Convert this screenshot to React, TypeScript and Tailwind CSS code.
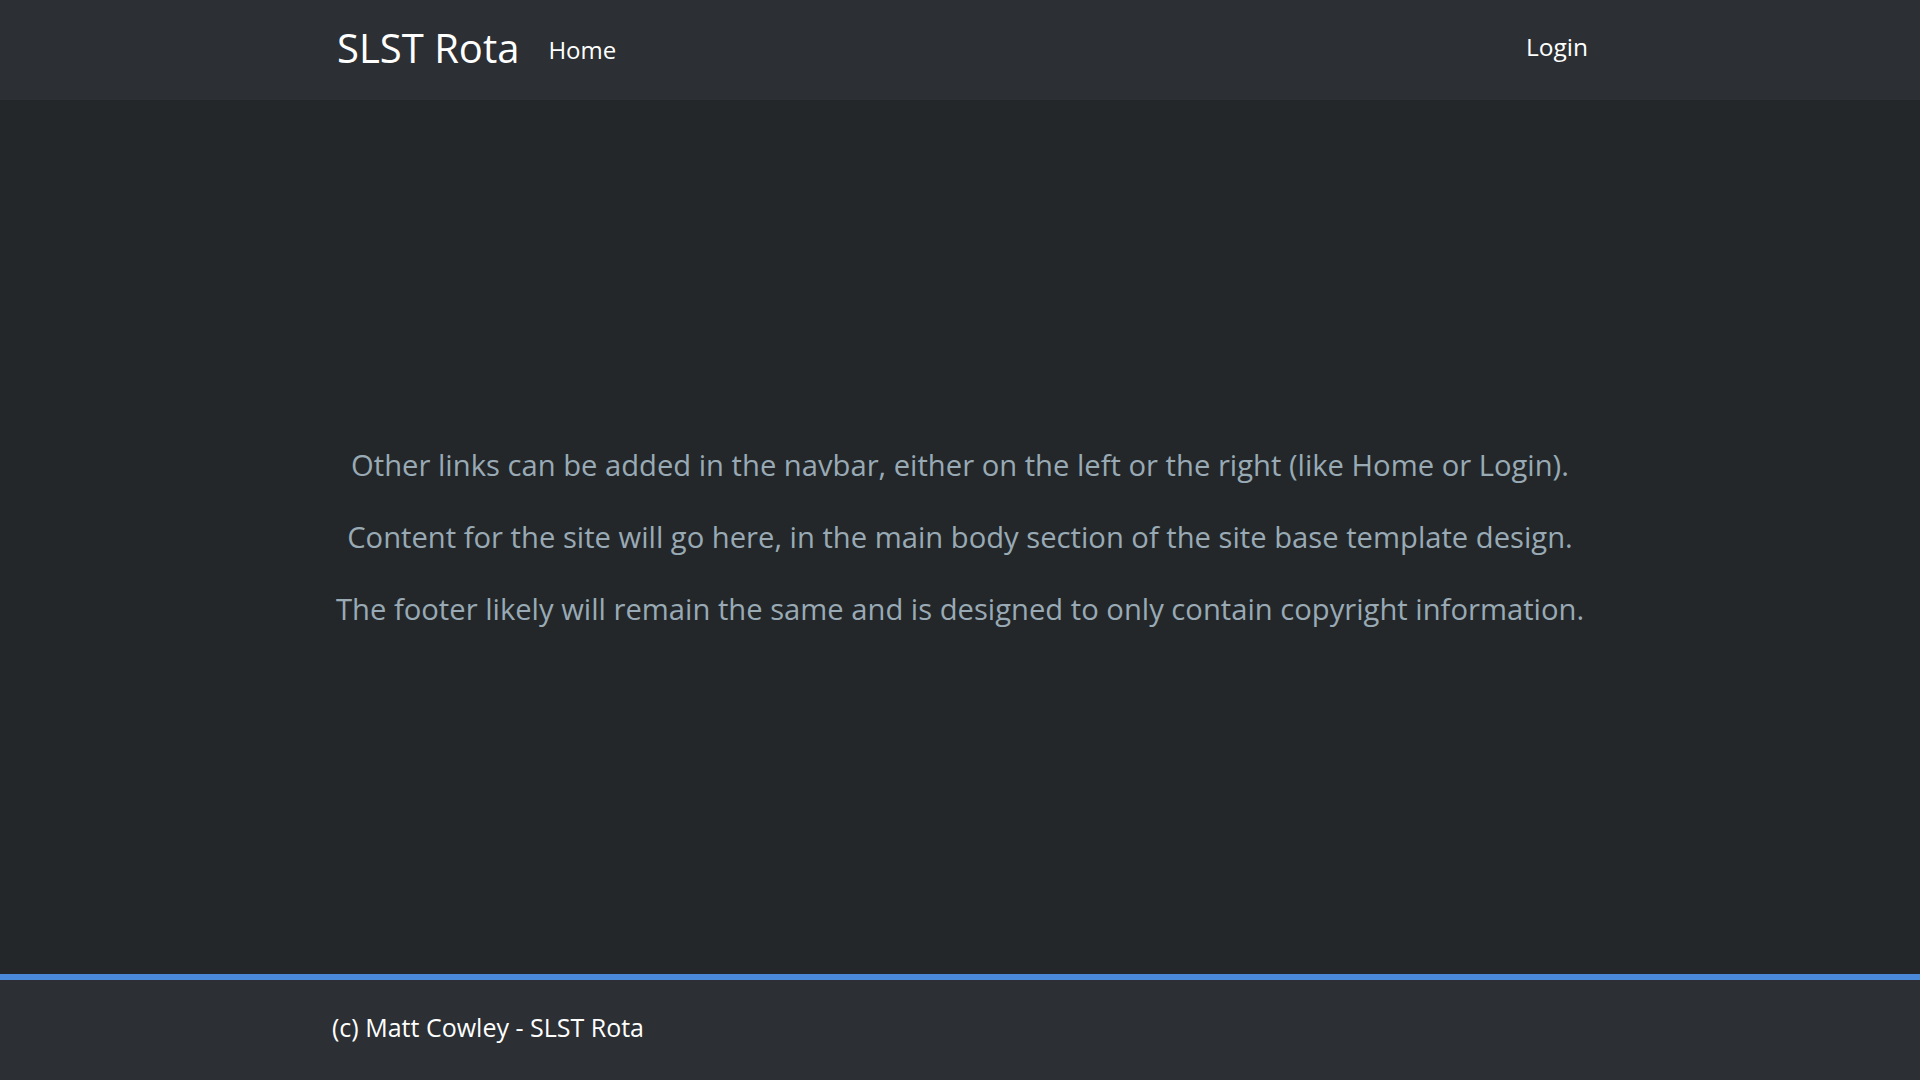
const App = () => {
  const lines = [
    "Other links can be added in the navbar, either on the left or the right (like Home or Login).",
    "Content for the site will go here, in the main body section of the site base template design.",
    "The footer likely will remain the same and is designed to only contain copyright information.",
  ];
  return (
    <div
      className="min-h-screen flex flex-col bg-[#23272a] text-white"
      style={{ fontFamily: '"Open Sans", "Noto Sans", sans-serif' }}
    >
      <nav className="h-[100px] bg-[#2c2f33] shrink-0">
        <div className="w-[1256px] mx-auto h-full flex items-center">
          <a href="#" className="text-[40px] pl-[5px] pb-1 leading-none">
            SLST Rota
          </a>
          <a href="#" className="ml-[29px] text-[24px] leading-none">
            Home
          </a>
          <a href="#" className="ml-auto text-[24.5px] leading-none pb-[6px]">
            Login
          </a>
        </div>
      </nav>
      <main className="flex-1 flex flex-col items-center justify-center gap-[34px] text-[#99aab5] text-[29.2px] leading-[38px]">
        {lines.map((line, i) => (
          <p key={i}>{line}</p>
        ))}
      </main>
      <footer className="h-[106px] shrink-0 bg-[#2c2f33] border-t-[6px] border-[#4a88da]">
        <div className="w-[1256px] mx-auto h-full flex items-center">
          <span className="text-[25px] pb-1">(c) Matt Cowley - SLST Rota</span>
        </div>
      </footer>
    </div>
  );
};

export default App;
